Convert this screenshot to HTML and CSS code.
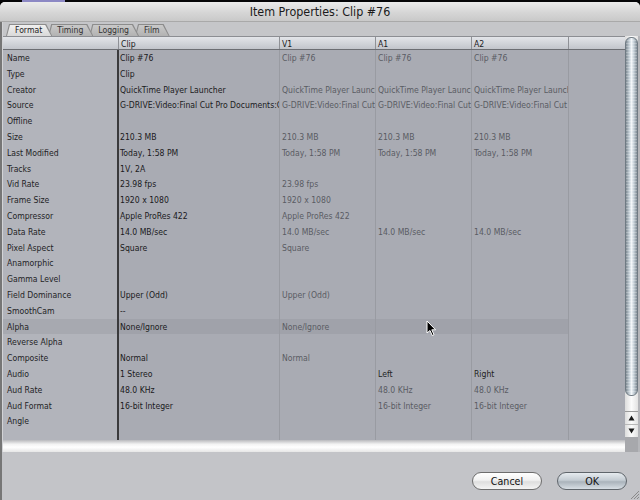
FILE: index.html
```html
<!DOCTYPE html>
<html lang="en">
<head>
    <meta charset="UTF-8">
    <title>Item Properties: Clip #76</title>
    <link rel="stylesheet" href="styles.css">
</head>
<body>
<div class="screen">
    <div class="desktop"></div>
    <div class="window">
        <div class="titlebar">Item Properties: Clip #76</div>

        <div class="body">
            <div class="tabs">
                <div class="tab on t1"><span>Format</span></div>
                <div class="tab t2"><span>Timing</span></div>
                <div class="tab t3"><span>Logging</span></div>
                <div class="tab t4"><span>Film</span></div>
            </div>

            <div class="tablearea">
                <div class="gridcol">
                    <div class="row head">
                        <div class="c lbl"></div>
                        <div class="c">Clip</div>
                        <div class="c">V1</div>
                        <div class="c">A1</div>
                        <div class="c">A2</div>
                        <div class="c last"></div>
                    </div>
                    <div id="rows"></div>
                    <div class="row filler">
                        <div class="c lbl"></div>
                        <div class="c"></div>
                        <div class="c"></div>
                        <div class="c"></div>
                        <div class="c"></div>
                        <div class="c last"></div>
                    </div>
                    <div class="band"></div>
                </div>

                <div class="scroll">
                    <div class="thumb"></div>
                    <div class="track"></div>
                    <div class="arrow">
                        <svg width="7" height="6" viewBox="0 0 7 6"><path d="M3.5 0.5 L6.5 5.5 L0.5 5.5 Z" fill="#1a1a1a"/></svg>
                    </div>
                    <div class="arrow down">
                        <svg width="7" height="6" viewBox="0 0 7 6"><path d="M0.5 0.5 L6.5 0.5 L3.5 5.5 Z" fill="#1a1a1a"/></svg>
                    </div>
                    <div class="corner"></div>
                </div>
                <div class="edge"></div>
            </div>

            <div class="footer">
                <button class="btn">Cancel</button>
                <button class="btn ok">OK</button>
            </div>
        </div>
    </div>

    <!-- mouse pointer over the Alpha row -->
    <svg class="pointer" width="11" height="17" viewBox="0 0 11 17">
        <path d="M1 1 L1 13 L4 10.5 L6.2 15.5 L8 14.7 L5.8 9.8 L9.6 9.8 Z" fill="#000" stroke="#fff" stroke-width="1"/>
    </svg>

    <svg class="grip" width="11" height="11" viewBox="0 0 11 11">
        <path d="M10 2 L2 10 M10 5 L5 10 M10 8 L8 10" stroke="#8a8a8a" stroke-width="1"/>
    </svg>
</div>

<script>
    // label, clip, v1, a1, a2  (a "!" prefix means dark text in a track column)
    const rows = [
        ["Name", "Clip #76", "Clip #76", "Clip #76", "Clip #76"],
        ["Type", "Clip", "", "", ""],
        ["Creator", "QuickTime Player Launcher", "QuickTime Player Launcher", "QuickTime Player Launcher", "QuickTime Player Launcher"],
        ["Source", "G-DRIVE:Video:Final Cut Pro Documents:Capture Scratch", "G-DRIVE:Video:Final Cut Pro", "G-DRIVE:Video:Final Cut Pro", "G-DRIVE:Video:Final Cut Pro"],
        ["Offline", "", "", "", ""],
        ["Size", "210.3 MB", "210.3 MB", "210.3 MB", "210.3 MB"],
        ["Last Modified", "Today, 1:58 PM", "Today, 1:58 PM", "Today, 1:58 PM", "Today, 1:58 PM"],
        ["Tracks", "1V, 2A", "", "", ""],
        ["Vid Rate", "23.98 fps", "23.98 fps", "", ""],
        ["Frame Size", "1920 x 1080", "1920 x 1080", "", ""],
        ["Compressor", "Apple ProRes 422", "Apple ProRes 422", "", ""],
        ["Data Rate", "14.0 MB/sec", "14.0 MB/sec", "14.0 MB/sec", "14.0 MB/sec"],
        ["Pixel Aspect", "Square", "Square", "", ""],
        ["Anamorphic", "", "", "", ""],
        ["Gamma Level", "", "", "", ""],
        ["Field Dominance", "Upper (Odd)", "Upper (Odd)", "", ""],
        ["SmoothCam", "--", "", "", ""],
        ["Alpha", "None/Ignore", "None/Ignore", "", ""],
        ["Reverse Alpha", "", "", "", ""],
        ["Composite", "Normal", "Normal", "", ""],
        ["Audio", "1 Stereo", "", "!Left", "!Right"],
        ["Aud Rate", "48.0 KHz", "", "48.0 KHz", "48.0 KHz"],
        ["Aud Format", "16-bit Integer", "", "16-bit Integer", "16-bit Integer"],
        ["Angle", "", "", "", ""]
    ];

    const box = document.getElementById('rows');
    rows.forEach(r => {
        const row = document.createElement('div');
        row.classList.add('row');
        if (r[0] === 'Alpha') row.classList.add('sel');

        let html = `<div class="c lbl">${r[0]}</div><div class="c clip">${r[1]}</div>`;
        for (let i = 2; i < 5; i++) {
            const dark = r[i].startsWith('!');
            html += `<div class="c sub${dark ? ' dark' : ''}">${dark ? r[i].slice(1) : r[i]}</div>`;
        }
        html += `<div class="c last"></div>`;
        row.innerHTML = html;
        box.appendChild(row);
    });
</script>
</body>
</html>
```

FILE: styles.css
```css
* {
    box-sizing: border-box;
}

body {
    margin: 0;
    background: #000;
    font-family: "DejaVu Sans Condensed", "Liberation Sans", sans-serif;
}

.screen {
    width: 640px;
    height: 500px;
    overflow: hidden;
    position: relative;
}

.desktop {
    height: 2px;
    background: linear-gradient(to right, #060608 22px, #8c88c4 22px 65px, #060608 65px);
}

/* Fenêtre */
.window {
    height: 498px;
    display: flex;
    flex-direction: column;
    background: #c3c4c8;
    border-radius: 5px 5px 0 0;
    overflow: hidden;
}

.titlebar {
    height: 20px;
    flex: none;
    text-align: center;
    font-size: 12.4px;
    line-height: 20px;
    color: #1b1b1b;
    background: linear-gradient(#ebebeb, #d6d6d6 55%, #c9c9c9);
    border-bottom: 1px solid #a9a9a9;
}

.body {
    flex: 1;
    display: flex;
    flex-direction: column;
    border-left: 2px solid #767676;
}

/* Onglets */
.tabs {
    height: 14px;
    flex: none;
    display: flex;
    align-items: flex-end;
    padding-left: 3px;
    background: #c5c6c9;
    border-left: 1px solid #d2d3d6;
}

.tab {
    position: relative;
    height: 12px;
    padding: 0 10px 0 9px;
    margin-right: -4px;
    font-size: 8.6px;
    line-height: 13px;
    color: #333;
    background: #8c8c8c;
    clip-path: polygon(0 100%, 3px 0, calc(100% - 6px) 0, 100% 100%);
}

.tab::before {
    content: "";
    position: absolute;
    inset: 1px 1px 0 1px;
    background: linear-gradient(#c9c9c9, #b2b2b2);
    clip-path: polygon(0 100%, 3px 0, calc(100% - 6px) 0, 100% 100%);
}

.tab span {
    position: relative;
}

.tab.on::before {
    background: linear-gradient(#f0f0f0, #d9d9d9);
}

.tab.on {
    color: #222;
}

.t1 { z-index: 4; }
.t2 { z-index: 3; }
.t3 { z-index: 2; }
.t4 { z-index: 1; }

/* Tableau */
.tablearea {
    height: 416px;
    flex: none;
    display: flex;
    border-left: 1px solid #d2d3d6;
}

.gridcol {
    width: 622px;
    display: flex;
    flex-direction: column;
}

.row {
    display: grid;
    grid-template-columns: 116px 161px 96px 96px 97px 56px;
    height: 15.8px;
    line-height: 15.8px;
    font-size: 8.6px;
}

.c {
    overflow: hidden;
    white-space: nowrap;
    padding: 1px 0 0 2px;
    background: #a9abb3;
    border-right: 1px solid #999ba2;
}

.c.lbl {
    padding-left: 4px;
    background: #b2b4bb;
    color: #232325;
    border-right: 2px solid #3a3a3c;
}

.c.clip {
    padding-left: 1px;
    color: #1a1a1c;
}

.c.sub {
    color: #5a5c63;
}

.c.sub.dark {
    color: #1f1f22;
}

.c.last {
    border-right: none;
}

.row.sel .c {
    background: #a0a2aa;
}

.row.sel .c.lbl {
    background: #a7a9b0;
}

.row.sel .c.last {
    background: #a9abb3;
}

.row.head {
    height: 14px;
    line-height: 13px;
    border-top: 1px solid #8c8e93;
    border-bottom: 1px solid #6c6e73;
}

.row.head .c {
    color: #202022;
    background: linear-gradient(#e3e5e9, #cfd2d7 60%, #c2c5cb);
    border-right: 1px solid #8f9196;
}

.row.head .c.lbl {
    border-right: 1px solid #8f9196;
}

.row.head .c.last {
    border-right: none;
}

.row.filler {
    flex: 1;
    height: auto;
}

.band {
    height: 12px;
    flex: none;
    background: linear-gradient(#b9babd, #f3f3f3 35%, #ffffff 60%, #e6e6e6);
}

/* Barre de défilement */
.scroll {
    width: 13px;
    display: flex;
    flex-direction: column;
    background: linear-gradient(to right, #dcdcdc, #fbfbfb 50%, #e2e2e2);
}

.thumb {
    height: 359px;
    margin-top: 1px;
    border: 1px solid #6f7a83;
    border-radius: 6px;
    background:
        repeating-linear-gradient(transparent 0 2px, rgba(255, 255, 255, 0.25) 2px 3px),
        linear-gradient(to right, #7f8a93, #c3ced6 30%, #f1f5f8 50%, #c3ced6 72%, #808b94);
}

.track {
    flex: 1;
}

.arrow {
    height: 13px;
    display: flex;
    align-items: center;
    justify-content: center;
    border-top: 1px solid #9a9a9a;
}

.arrow.down {
    border-top: 1px solid #b8b8b8;
}

.corner {
    height: 15px;
    background: #a7a8ac;
}

.edge {
    width: 2px;
    background: #b5b6ba;
}

/* Boutons */
.footer {
    flex: 1;
    display: flex;
    justify-content: flex-end;
    align-items: flex-start;
    gap: 15px;
    padding: 20px 13px 0 0;
}

.btn {
    width: 70px;
    height: 18px;
    padding: 0;
    font-family: inherit;
    font-size: 10.6px;
    color: #111;
    border: 1px solid #6d6d6d;
    border-radius: 9px;
    background: linear-gradient(#ffffff, #f1f1f1 45%, #dedede 55%, #f4f4f4);
}

.btn.ok {
    border-color: #5f656b;
    background: linear-gradient(#e6ebef, #c4ccd3 45%, #aab3bb 55%, #d7dee4);
}

.pointer {
    position: absolute;
    left: 426px;
    top: 320px;
}

.grip {
    position: absolute;
    right: 0;
    bottom: 0;
}
```
